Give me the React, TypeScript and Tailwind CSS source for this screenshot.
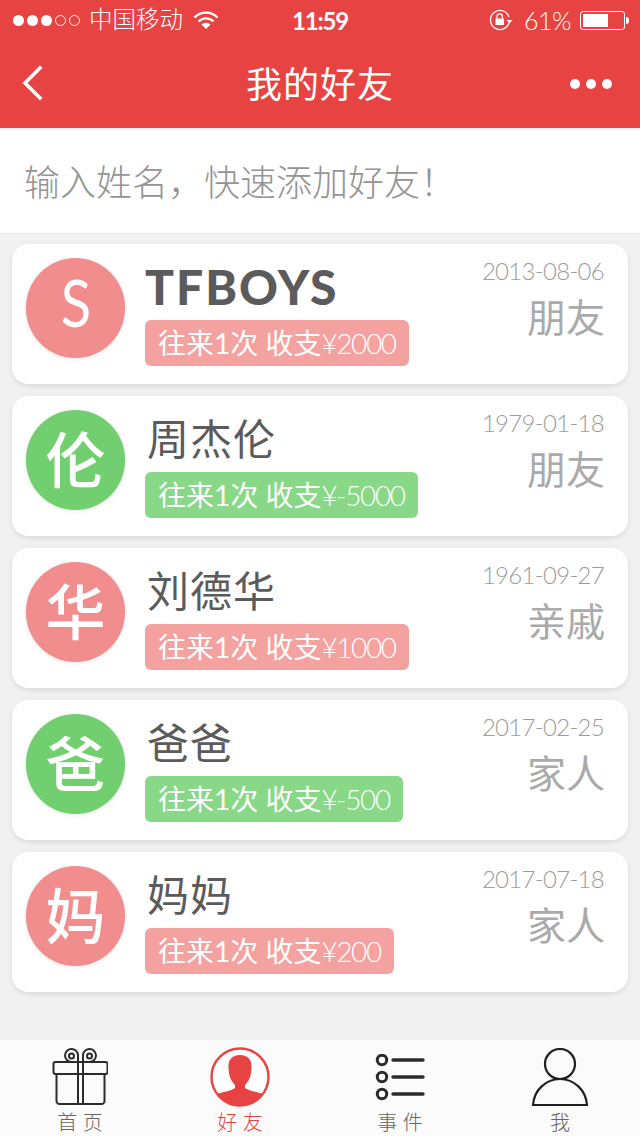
const cjk = '"Lato", "Noto Sans CJK SC", sans-serif';

interface Friend { mark: string; name: string; amount: string; date: string; relation: string; green: boolean; }

const friends: Friend[] = [
    { mark: 'S', name: 'TFBOYS', amount: '2000', date: '2013-08-06', relation: '朋友', green: false },
    { mark: '伦', name: '周杰伦', amount: '-5000', date: '1979-01-18', relation: '朋友', green: true },
    { mark: '华', name: '刘德华', amount: '1000', date: '1961-09-27', relation: '亲戚', green: false },
    { mark: '爸', name: '爸爸', amount: '-500', date: '2017-02-25', relation: '家人', green: true },
    { mark: '妈', name: '妈妈', amount: '200', date: '2017-07-18', relation: '家人', green: false },
];

function StatusBar() {
    return (
        <div className="h-10 flex items-center pl-[13px] pr-[11px] text-white relative">
            <div className="flex items-center gap-[3px]">
                {[0, 1, 2].map((i) => <span key={i} className="w-[11px] h-[11px] rounded-full bg-white" />)}
                {[0, 1].map((i) => <span key={i} className="w-[11px] h-[11px] rounded-full border border-white" />)}
            </div>
            <span className="ml-[9px] text-[23.5px] leading-none font-light">中国移动</span>
            <svg className="ml-[10px]" width="26" height="20" viewBox="0 0 26 20">
                <path d="M1.5 7.5 a16 16 0 0 1 23 0" fill="none" stroke="#fff" strokeWidth="2.4" />
                <path d="M5.5 11.5 a10.5 10.5 0 0 1 15 0" fill="none" stroke="#fff" strokeWidth="2.4" />
                <path d="M13 19 L8.5 14.5 a6.5 6.5 0 0 1 9 0 Z" fill="#fff" />
            </svg>
            <span className="absolute left-[292px] top-[7px] text-[24px] leading-[28px] font-bold tracking-[-1.2px]">11:59</span>
            <div className="ml-auto flex items-center">
                <svg width="24" height="22" viewBox="0 0 24 22">
                    <path d="M20 14 A9.5 9.5 0 1 1 20 8" fill="none" stroke="#fff" strokeWidth="1.3" />
                    <path d="M17.5 11 h6 l-3 3.5 Z" fill="#fff" />
                    <rect x="6.5" y="9.5" width="8.5" height="6.5" fill="#fff" />
                    <path d="M8 9.5 v-2 a2.7 2.7 0 0 1 5.4 0 v2" fill="none" stroke="#fff" strokeWidth="1.3" />
                </svg>
                <span className="ml-[11px] text-[25px] leading-none font-light tracking-[-0.5px]">61%</span>
                <div className="ml-[9px] w-[45px] h-[19px] border border-white rounded-[3px] p-[2px]">
                    <div className="w-[25px] h-full bg-white" />
                </div>
                <span className="ml-[1px] w-[3px] h-[7px] bg-white rounded-r-sm" />
            </div>
        </div>
    );
}

function GiftIcon() {
    return (
        <svg width="56" height="58" viewBox="0 0 56 58" fill="none" stroke="#2b2b2b" strokeWidth="2">
            <rect x="1.5" y="14" width="54" height="12" rx="2" />
            <path d="M4.5 26 v27 a3 3 0 0 0 3 3 h42 a3 3 0 0 0 3 -3 v-27" />
            <path d="M26 14 v42 M31 14 v42" />
            <path d="M26 14 v-6 a6.5 6.5 0 1 0 -6.5 6" />
            <path d="M31 14 v-6 a6.5 6.5 0 1 1 6.5 6" />
            <circle cx="19.5" cy="8" r="2.5" />
            <circle cx="37.5" cy="8" r="2.5" />
        </svg>
    );
}

function AvatarIcon() {
    return (
        <svg width="60" height="60" viewBox="0 0 60 60">
            <circle cx="30" cy="30" r="28.5" fill="#fff" stroke="#e84343" strokeWidth="2.4" />
            <path d="M30 8 C21 8 18 14 18.5 21 C19 28 20 33 25 38 L25 41 C21 44 12 45 7 47 C13 55 22 59 30 59 C38 59 47 55 53 47 C48 45 39 44 35 41 L35 38 C40 33 41 28 41.5 21 C42 14 39 8 30 8 Z" fill="#e84343" />
        </svg>
    );
}

function ListIcon() {
    return (
        <svg width="52" height="50" viewBox="0 0 52 50" fill="none" stroke="#2b2b2b">
            {[6, 23, 40].map((y) => (
                <g key={y}>
                    <circle cx="8" cy={y} r="4.7" strokeWidth="3" />
                    <path d={`M19 ${y} H49`} strokeWidth="3.4" strokeLinecap="round" />
                </g>
            ))}
        </svg>
    );
}

function PersonIcon() {
    return (
        <svg width="58" height="60" viewBox="0 0 58 60" fill="none" stroke="#1f1f1f" strokeWidth="2.2">
            <circle cx="29" cy="16" r="15" />
            <path d="M2 57 C3 42 15 31 29 31 C43 31 55 42 56 57 Z" />
        </svg>
    );
}

function FriendCard({ f }: { f: Friend }) {
    const latin = f.mark === 'S';
    return (
        <div className="h-[140px] bg-white rounded-[16px] shadow-[0_2px_5px_rgba(0,0,0,0.1)] pl-[14px] pr-[23px] pt-[14px] flex">
            <div className={`w-[99px] h-[100px] rounded-full shrink-0 flex items-center justify-center text-white shadow-[0_1px_4px_rgba(0,0,0,0.1)] ${f.green ? 'bg-[#72cf6f]' : 'bg-[#f28d8d]'} ${latin ? 'text-[66px] leading-none pb-[13px]' : 'text-[60px] font-medium'}`}>
                <span className={latin ? 'scale-x-[0.85]' : ''}>{f.mark}</span>
            </div>
            <div className="ml-[20px] flex flex-col items-start">
                <div className={`h-[62px] pb-[4px] flex items-center text-[#5b5b5b] leading-none ${latin ? 'text-[48px] font-black tracking-[2px]' : 'text-[42px] tracking-[1px] ml-[2px]'}`}>
                    {f.name}
                </div>
                <div className={`h-[46px] rounded-[6px] px-[13px] flex items-center text-white text-[28px] leading-none whitespace-nowrap ${f.green ? 'bg-[#88d888]' : 'bg-[#f4a2a0]'}`}>
                    往来1次 收支<span className="font-light tracking-[-1.4px]">¥{f.amount}</span>
                </div>
            </div>
            <div className="ml-auto flex flex-col items-end">
                <div className="mr-[1px] text-[#9c9c9c] text-[24px] leading-[26px] font-light tracking-[-0.7px]">{f.date}</div>
                <div className="text-[#aaaaaa] text-[39px] leading-[46px] mt-[10px]">{f.relation}</div>
            </div>
        </div>
    );
}

export default function App() {
    const tabs = [
        { label: '首 页', icon: <GiftIcon />, active: false, pad: 'pb-[6px]' },
        { label: '好 友', icon: <AvatarIcon />, active: true, pad: 'pb-[5px]' },
        { label: '事 件', icon: <ListIcon />, active: false, pad: 'pb-[8px]' },
        { label: '我', icon: <PersonIcon />, active: false, pad: 'pb-[4px]' },
    ];

    return (
        <div className="w-[640px] h-[1136px] bg-[#f1f1f1] flex flex-col overflow-hidden" style={{ fontFamily: cjk }}>
            <div className="bg-[#e84343] h-[128px] shrink-0">
                <StatusBar />
                <div className="h-[88px] flex items-center justify-between pl-[22px] pr-[28px] text-white">
                    <div className="w-[62px] -mt-[2px]">
                        <svg className="block" width="22" height="36" viewBox="0 0 22 36" fill="none" stroke="#fff" strokeWidth="3.6" strokeLinecap="square">
                            <path d="M18 3 L3 18 L18 33" />
                        </svg>
                    </div>
                    <span className="text-[36px] leading-none tracking-[1px]">我的好友</span>
                    <div className="w-[56px] flex justify-end gap-[6px]">
                        {[0, 1, 2].map((i) => <span key={i} className="w-[10px] h-[10px] rounded-full bg-white" />)}
                    </div>
                </div>
            </div>

            <div className="mt-[2px] h-[104px] shrink-0 bg-white border-b border-[#e6e6e6] pl-[24px] flex items-center text-[36px] text-[#949494] font-light">
                输入姓名，快速添加好友！
            </div>

            <div className="flex-1 px-[12px] pt-[10px] flex flex-col gap-[12px]">
                {friends.map((f) => <FriendCard key={f.date} f={f} />)}
            </div>

            <div className="h-[96px] shrink-0 bg-[#fbfbfb] grid grid-cols-4">
                {tabs.map((t) => (
                    <div key={t.label} className="flex flex-col items-center">
                        <div className={`h-[72px] flex items-end ${t.pad}`}>{t.icon}</div>
                        <div className={`text-[20px] leading-[20px] font-light whitespace-pre ${t.active ? 'text-[#e84343]' : 'text-[#666666]'}`}>{t.label}</div>
                    </div>
                ))}
            </div>
        </div>
    );
}
